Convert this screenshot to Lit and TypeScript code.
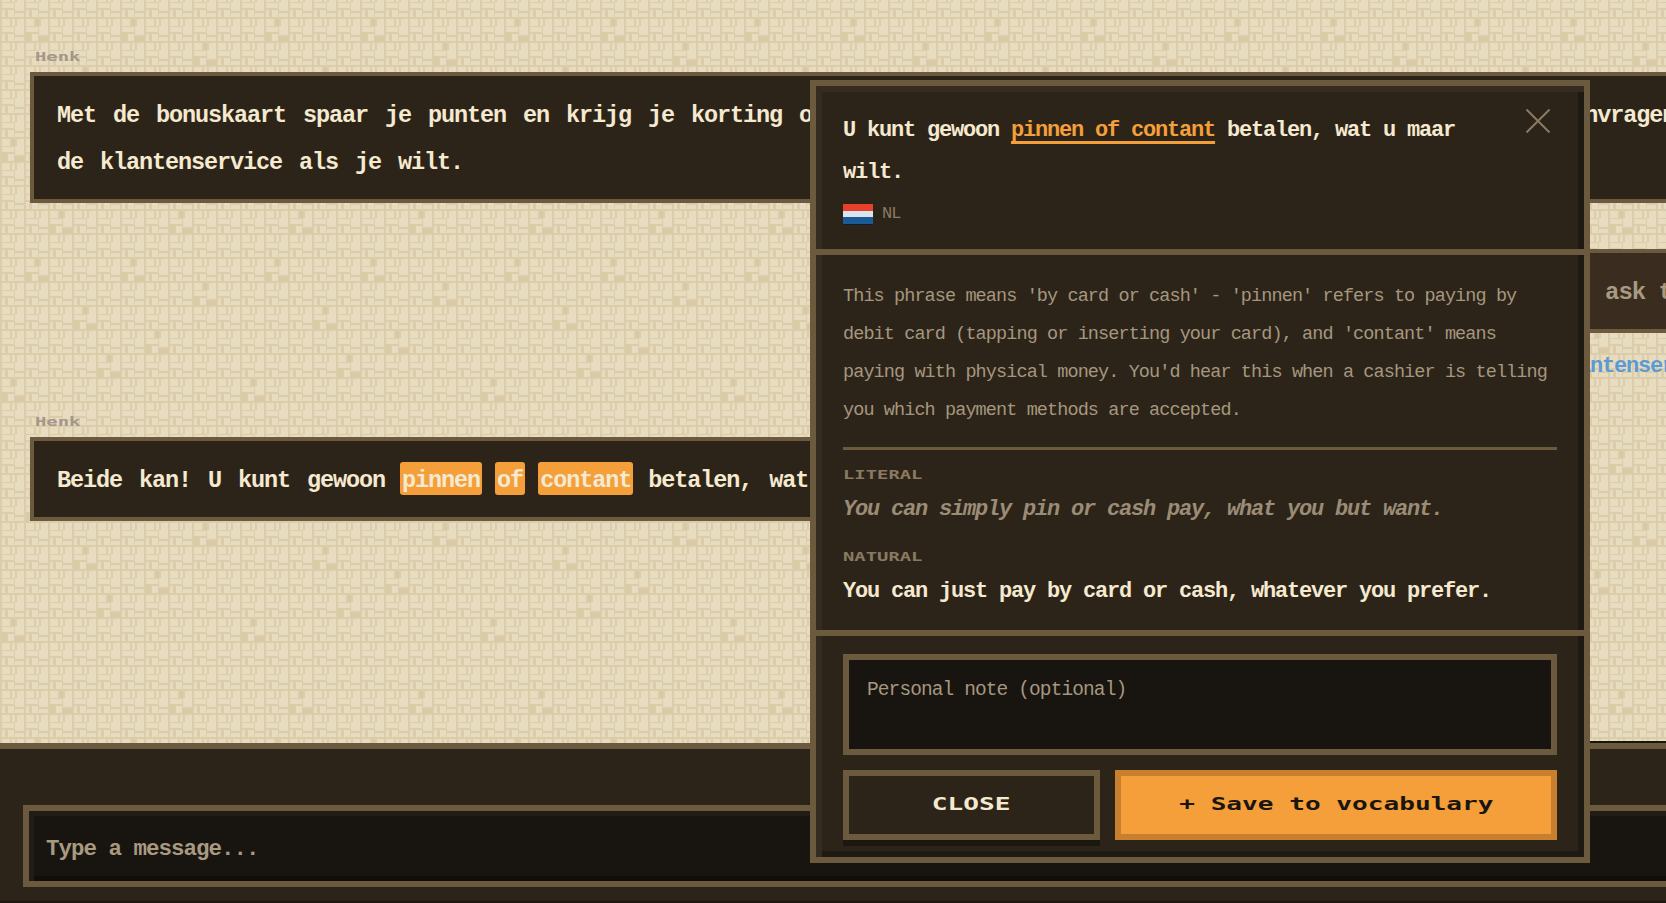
import { LitElement, html, css } from "lit";
import { customElement } from "lit/decorators.js";

const b = "%23e8dcc0";
const g = "%23d9c9a5";
const tile = `data:image/svg+xml,%3Csvg xmlns='http://www.w3.org/2000/svg' width='24' height='24' shape-rendering='crispEdges'%3E%3Crect width='24' height='24' fill='%23dccdaa'/%3E%3Cg fill='${b}'%3E%3Crect x='2' y='3' width='12' height='5'/%3E%3Crect x='15' y='2' width='9' height='9'/%3E%3Crect x='2' y='10' width='3' height='7'/%3E%3Crect x='8' y='10' width='6' height='7'/%3E%3Crect x='15' y='13' width='9' height='4'/%3E%3Crect x='2' y='19' width='8' height='5'/%3E%3Crect x='12' y='19' width='3' height='5'/%3E%3Crect x='17' y='19' width='7' height='5'/%3E%3Crect x='2' y='0' width='8' height='2'/%3E%3Crect x='12' y='0' width='3' height='2'/%3E%3Crect x='17' y='0' width='7' height='2'/%3E%3C/g%3E%3C/svg%3E`;
const patchCells = [[7, 9], [2, 9], [5, 1], [1, 1], [8, 2], [3, 3], [6, 4], [4, 5], [0, 6]];
const patchRects = patchCells
  .map(([x, y]) => {
    const X = x * 24, Y = y * 24;
    return `%3Crect x='${X + 2}' y='${Y + 10}' width='3' height='7'/%3E%3Crect x='${X + 15}' y='${Y + 13}' width='9' height='4'/%3E%3Crect x='${X + 12}' y='${Y - 5}' width='3' height='7'/%3E`;
  })
  .join("");
const patch = `data:image/svg+xml,%3Csvg xmlns='http://www.w3.org/2000/svg' width='240' height='240' shape-rendering='crispEdges'%3E%3Cg fill='${g}'%3E${patchRects}%3C/g%3E%3C/svg%3E`;

@customElement("app-root")
export class AppRoot extends LitElement {
  static styles = css`
    :host {
      display: flex;
      flex-direction: column;
      width: 100%;
      height: 100vh;
      overflow: hidden;
      position: relative;
      font-family: "Liberation Mono", monospace;
      color: #f5e9d0;
      --line: #6b5a3e;
      --panel: #2d2419;
      --orange: #f49f3a;
    }
    .chat {
      flex: 1;
      min-height: 0;
      overflow: hidden;
      display: flex;
      flex-direction: column;
      padding: 47px 0 0 30px;
      background-color: #dccdaa;
    }
    .wide {
      font-family: "DejaVu Sans Mono", monospace;
      font-weight: 700;
      display: inline-block;
      transform: scaleX(1.45);
      transform-origin: left center;
      white-space: nowrap;
    }
    .who {
      height: 18px;
      line-height: 18px;
      padding: 1px 0 0 5px;
      margin-bottom: 6px;
      font-size: 13px;
      color: #a3968a;
    }
    .who.second {
      margin-top: 31px;
    }
    .bubble {
      box-sizing: border-box;
      width: fit-content;
      background: var(--panel);
      border: 4px solid var(--line);
      padding: 16px 30px 13px 23px;
      font-size: 23.5px;
      letter-spacing: -1.1px;
      line-height: 47px;
      word-spacing: 4px;
      white-space: nowrap;
      font-weight: 700;
    }
    .hl {
      display: inline-block;
      height: 33px;
      background: var(--orange);
      border-radius: 3px;
      line-height: 37px;
      padding: 0 2px;
      margin: 0 -2px;
    }
    .ask {
      box-sizing: border-box;
      margin: 46px 0 0 1560px;
      width: 400px;
      height: 84px;
      background: #3a2d20;
      border: 4px solid var(--line);
      border-right: 0;
      border-left: 0;
      padding: 2px 15px 0;
      font-size: 24px;
      letter-spacing: -1px;
      line-height: 76px;
      color: #a89a80;
      font-weight: 700;
      white-space: nowrap;
    }
    .link {
      margin: 19px 0 0 1524px;
      font-size: 22px;
      letter-spacing: -1.2px;
      line-height: 29px;
      color: #5b9bd5;
      white-space: nowrap;
      font-weight: 700;
    }
    .edge {
      margin: auto 0 0 1560px;
      height: 2px;
      background: #1a1510;
      flex: none;
    }
    .bar {
      flex: none;
      box-sizing: border-box;
      height: 160px;
      background: var(--panel);
      border-top: 6px solid var(--line);
      padding: 56px 0 0 23px;
      overflow: hidden;
      box-shadow: inset 0 -2px 0 #1c1710;
    }
    .message {
      display: block;
      box-sizing: border-box;
      width: 1800px;
      height: 82px;
      margin: 0;
      background: #181410;
      border: 6px solid var(--line);
      box-shadow: inset 5px 5px 0 #221c16, inset 0 -5px 0 #100d0a;
      outline: none;
      padding: 5px 17px 0;
      font: 700 22.5px "Liberation Mono", monospace;
      letter-spacing: -1px;
      color: #a89a80;
    }
    .message::placeholder {
      color: #a89a80;
      opacity: 1;
    }
    .modal {
      position: absolute;
      left: 810px;
      top: 80px;
      width: 780px;
      height: 783px;
      box-sizing: border-box;
      background: var(--panel);
      border: 6px solid var(--line);
      box-shadow: inset 6px 6px 0 #352b21, inset -6px -6px 0 #1f1914;
      display: flex;
      flex-direction: column;
    }
    .head {
      position: relative;
      box-sizing: border-box;
      height: 169px;
      flex: none;
      padding: 24px 27px 0;
      border-bottom: 6px solid var(--line);
    }
    .phrase {
      font-size: 22px;
      letter-spacing: -1.2px;
      line-height: 42px;
      font-weight: 700;
      width: 640px;
    }
    .phrase .key {
      color: var(--orange);
      text-decoration: underline 3px var(--orange);
      text-decoration-skip-ink: none;
      text-underline-offset: 5px;
    }
    .lang {
      display: flex;
      align-items: center;
      gap: 9px;
      margin-top: 9px;
      font-size: 17px;
      letter-spacing: -1px;
      line-height: 22px;
      color: #8a7a62;
    }
    .flag {
      display: block;
      width: 30px;
      height: 21px;
    }
    .x {
      position: absolute;
      right: 34px;
      top: 23px;
      width: 24px;
      height: 24px;
      display: block;
    }
    .body {
      box-sizing: border-box;
      height: 381px;
      flex: none;
      padding: 23px 27px 0;
      border-bottom: 6px solid var(--line);
    }
    .explain {
      margin: 0;
      font-size: 18.5px;
      letter-spacing: -0.9px;
      line-height: 38px;
      color: #a5977f;
    }
    .rule {
      height: 3px;
      background: var(--line);
      margin: 17px 0 18px;
    }
    .label {
      display: block;
      font-size: 13px;
      line-height: 14px;
      color: #8a7a62;
    }
    .literal {
      margin: 12px 0 25px;
      font-size: 22px;
      letter-spacing: -1.2px;
      line-height: 30px;
      font-style: italic;
      color: #9a8c76;
      font-weight: 700;
    }
    .natural {
      margin: 12px 0 0;
      font-size: 22px;
      letter-spacing: -1.2px;
      line-height: 30px;
      font-weight: 700;
    }
    .foot {
      flex: 1;
      padding: 18px 27px 0;
    }
    .note {
      display: block;
      box-sizing: border-box;
      width: 100%;
      height: 101px;
      margin: 0;
      background: #181410;
      border: 6px solid var(--line);
      outline: none;
      resize: none;
      padding: 15px 18px;
      font: 400 19.5px/30px "Liberation Mono", monospace;
      letter-spacing: -0.9px;
      color: #a5977f;
    }
    .note::placeholder {
      color: #a5977f;
      opacity: 1;
    }
    .actions {
      display: flex;
      gap: 15px;
      margin-top: 15px;
    }
    .btn {
      box-sizing: border-box;
      height: 70px;
      display: flex;
      align-items: center;
      justify-content: center;
      font-size: 18px;
      padding-bottom: 3px;
    }
    .btn .wide {
      transform-origin: center;
    }
    .close {
      width: 257px;
      background: var(--panel);
      border: 6px solid var(--line);
      box-shadow: 0 6px 0 #1c1810;
      color: #f5e9d0;
    }
    .save {
      flex: 1;
      background: var(--orange);
      border: 6px solid #c87f2e;
      color: #1a1510;
    }
  `;

  render() {
    return html`
      <div class="chat" style="background-image:url(&quot;${patch}&quot;),url(&quot;${tile}&quot;)">
        <div class="who"><span class="wide">Henk</span></div>
        <div class="bubble">Met de bonuskaart spaar je punten en krijg je korting op veel producten in de winkel. Je kunt hem ook gratis aanvragen bij<br />de klantenservice als je wilt.</div>
        <div class="ask">ask the teacher</div>
        <div class="link">klantenservice</div>
        <div class="who second"><span class="wide">Henk</span></div>
        <div class="bubble">Beide kan! U kunt gewoon <span class="hl">pinnen</span> <span class="hl">of</span> <span class="hl">contant</span> betalen, wat u maar wilt.</div>
        <div class="edge"></div>
      </div>
      <div class="bar">
        <input class="message" placeholder="Type a message..." />
      </div>
      <div class="modal">
        <div class="head">
          <div class="phrase">U kunt gewoon <span class="key">pinnen of contant</span> betalen, wat u maar wilt.</div>
          <div class="lang">
            <svg class="flag" viewBox="0 0 30 21" shape-rendering="crispEdges">
              <rect width="30" height="7" fill="#e8412a" />
              <rect y="7" width="30" height="6" fill="#dce3ee" />
              <rect y="13" width="30" height="7" fill="#1a5a96" />
              <rect y="20" width="30" height="1" fill="#141a30" />
            </svg>
            <span>NL</span>
          </div>
          <svg class="x" viewBox="0 0 24 24" fill="none" stroke="#8a7a62" stroke-width="2">
            <path d="M0.5 0.5 23.5 23.5M23.5 0.5 0.5 23.5" />
          </svg>
        </div>
        <div class="body">
          <p class="explain">This phrase means 'by card or cash' - 'pinnen' refers to paying by debit card (tapping or inserting your card), and 'contant' means paying with physical money. You'd hear this when a cashier is telling you which payment methods are accepted.</p>
          <div class="rule"></div>
          <span class="label"><span class="wide">LITERAL</span></span>
          <p class="literal">You can simply pin or cash pay, what you but want.</p>
          <span class="label"><span class="wide">NATURAL</span></span>
          <p class="natural">You can just pay by card or cash, whatever you prefer.</p>
        </div>
        <div class="foot">
          <textarea class="note" placeholder="Personal note (optional)"></textarea>
          <div class="actions">
            <div class="btn close"><span class="wide">CLOSE</span></div>
            <div class="btn save"><span class="wide">+ Save to vocabulary</span></div>
          </div>
        </div>
      </div>
    `;
  }
}
